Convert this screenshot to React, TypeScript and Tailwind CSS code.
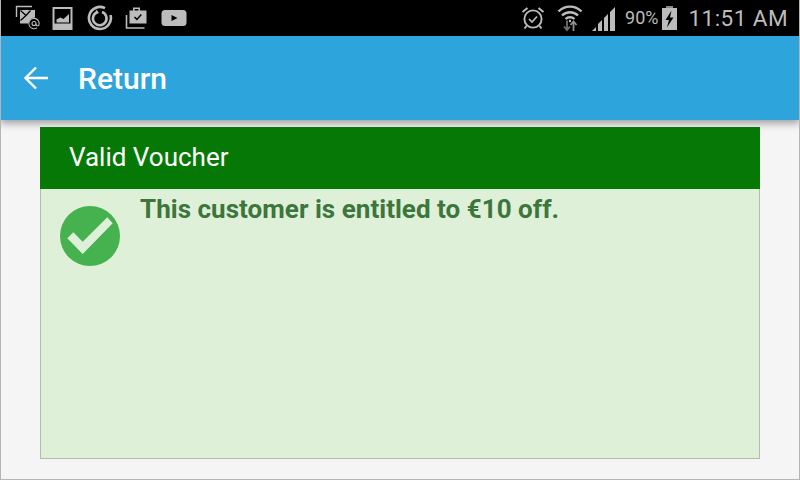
const iconColor = "#bcbcbc";

const StatusLeft = () => (
  <div className="flex items-center">
    <svg width="26" height="26" viewBox="0 0 26 26" className="ml-[15px]" fill="none">
      <path d="M1.500 12V1.500H17" stroke={iconColor} strokeWidth="1.400" />
      <path d="M5 5h15v7.500a6.500 6.500 0 0 0-6.500 6H5z" fill={iconColor} />
      <path d="M5.500 5.500l5.500 5-5.500 5M15.500 5.500l-4.500 5" stroke="#000" strokeWidth="1.300" />
      <path d="M22 22.800a5.200 5.200 0 1 1 2.200-4.300c0 3-3.200 3-3.200 .5" stroke={iconColor} strokeWidth="1.100" />
      <circle cx="19" cy="18.500" r="2" stroke={iconColor} strokeWidth="1.100" />
    </svg>
    <svg width="22" height="24" viewBox="0 0 22 24" className="ml-[11px]">
      <path fillRule="evenodd" d="M0.500 1h20v23h-20zM2.500 3v14.500h16V3z" fill={iconColor} />
      <path d="M4.500 16.500v-3l4-2 3 1.500 5.500-5v8.500z" fill={iconColor} />
    </svg>
    <svg width="26" height="26" viewBox="0 0 26 26" className="ml-[13px]" fill="none" stroke={iconColor}>
      <path d="M18 3.200A11 11 0 1 0 23.500 10" strokeWidth="2.600" />
      <path d="M10 7.200a6.800 6.800 0 1 0 5-.2" strokeWidth="2.600" />
      <path d="M9.500 4.500l2.500 3.500-4 1.500z" fill={iconColor} stroke="none" />
    </svg>
    <svg width="24" height="24" viewBox="0 0 24 24" className="ml-[12px]" fill="none">
      <path d="M1.500 9v13h18" stroke={iconColor} strokeWidth="1.600" />
      <path d="M8 4.500V1.500h7v3h6.500v13H4.500v-13z" fill={iconColor} />
      <path d="M9.600 4.500V3h3.800v1.500z" fill="#000" />
      <path d="M9.500 11l2.400 2.400 4.400-4.800" stroke="#000" strokeWidth="1.500" />
    </svg>
    <svg width="26" height="20" viewBox="0 0 26 20" className="ml-[12px]">
      <rect x="0.500" y="2" width="25" height="16" rx="3.500" fill={iconColor} />
      <path d="M10.500 7l6 3-6 3z" fill="#000" />
    </svg>
  </div>
);

const StatusRight = () => (
  <div className="flex items-center">
    <svg width="26" height="26" viewBox="0 0 26 26" fill="none" stroke={iconColor}>
      <circle cx="13" cy="14" r="8.600" strokeWidth="1.900" />
      <path d="M9 14l3 3 5-5.500" strokeWidth="1.700" />
      <path d="M2.500 7l5-4M23.500 7l-5-4M6.500 21l-2 2.500M19.500 21l2 2.500" strokeWidth="2" />
    </svg>
    <svg width="26" height="27" viewBox="0 0 26 27" className="ml-[11px]" fill="none" stroke={iconColor}>
      <path d="M1.500 6.500a16 16 0 0 1 23 0" strokeWidth="2.400" />
      <path d="M5 10.500a11.500 11.500 0 0 1 16 0" strokeWidth="2.400" />
      <path d="M8.500 14a6.500 6.500 0 0 1 9 0" strokeWidth="2.400" />
      <circle cx="13" cy="16" r="1.200" fill={iconColor} stroke="none" />
      <path d="M10 15.500V25M7 21.500l3 3.500 3-3.500" strokeWidth="1.800" stroke="#6f6f6f" />
      <path d="M16.500 26v-9.500M13.500 20l3-3.500 3 3.500" strokeWidth="1.800" stroke="#8f8f8f" />
    </svg>
    <svg width="25" height="25" viewBox="0 0 25 25" className="ml-[8px]">
      <path d="M1 25l4-4v4zM7 25v-7l4-4v11zM13 25V12l4-4v17zM19 25V6l5-5v24z" fill={iconColor} />
    </svg>
    <span className="ml-[9px] font-['Roboto',sans-serif] text-[18px] text-[#bcbcbc] leading-none">90%</span>
    <svg width="15" height="24" viewBox="0 0 15 24" className="ml-[4px]">
      <path d="M4 0h7v2H4z" fill="#8a8a8a" />
      <path fillRule="evenodd" d="M0 2h15v22H0zM9.500 4.500L3.500 14h3.400L5 21.500l6.500-10H8z" fill={iconColor} />
    </svg>
    <span className="ml-[11px] mr-[12px] font-['Roboto',sans-serif] text-[22.500px] tracking-[0.450px] text-[#bcbcbc] leading-none">11:51 AM</span>
  </div>
);

export default function App() {
  return (
    <div className="w-[800px] h-[480px] flex flex-col overflow-hidden bg-[#f5f5f5] border-x border-b border-[#b5b5b5] font-['Roboto',sans-serif]">
      <div className="-mx-px h-9 shrink-0 bg-black flex items-center justify-between">
        <StatusLeft />
        <StatusRight />
      </div>
      <div className="-mx-px h-[84px] shrink-0 bg-[#2ea4dc] flex items-center relative z-10 shadow-[0_3px_8px_rgba(0,0,0,0.38)]">
        <svg width="28" height="28" viewBox="0 0 28 28" className="ml-[22px]" fill="none" stroke="#fff" strokeWidth="2.400">
          <path d="M26 14H4M14 3.500L3.500 14 14 24.500" />
        </svg>
        <span className="ml-[28px] pt-[2px] text-[30px] font-medium text-white leading-none">Return</span>
      </div>
      <div className="flex-1 flex flex-col pt-[7px] pb-5 px-[39px]">
        <div className="h-[62px] shrink-0 bg-[#067806] flex items-center pl-[29px] pb-[2px] text-[26px] text-white leading-none relative z-20">
          Valid Voucher
        </div>
        <div className="flex-1 flex items-start bg-[#dff0d8] border-x border-b border-[#b4b9b2]">
          <svg width="60" height="60" viewBox="0 0 60 60" className="ml-[19px] mt-[17px] shrink-0">
            <circle cx="30" cy="30" r="30" fill="#45b14f" />
            <path d="M7.300 32.300L13.300 26.300 22.700 35.700 47.300 11.300 52.700 17.300 22.700 48z" fill="#dff0d8" />
          </svg>
          <p className="ml-5 mt-[5px] text-[26px] tracking-[0.03px] font-bold text-[#3c763d] leading-[30px]">
            This customer is entitled to €10 off.
          </p>
        </div>
      </div>
    </div>
  );
}
